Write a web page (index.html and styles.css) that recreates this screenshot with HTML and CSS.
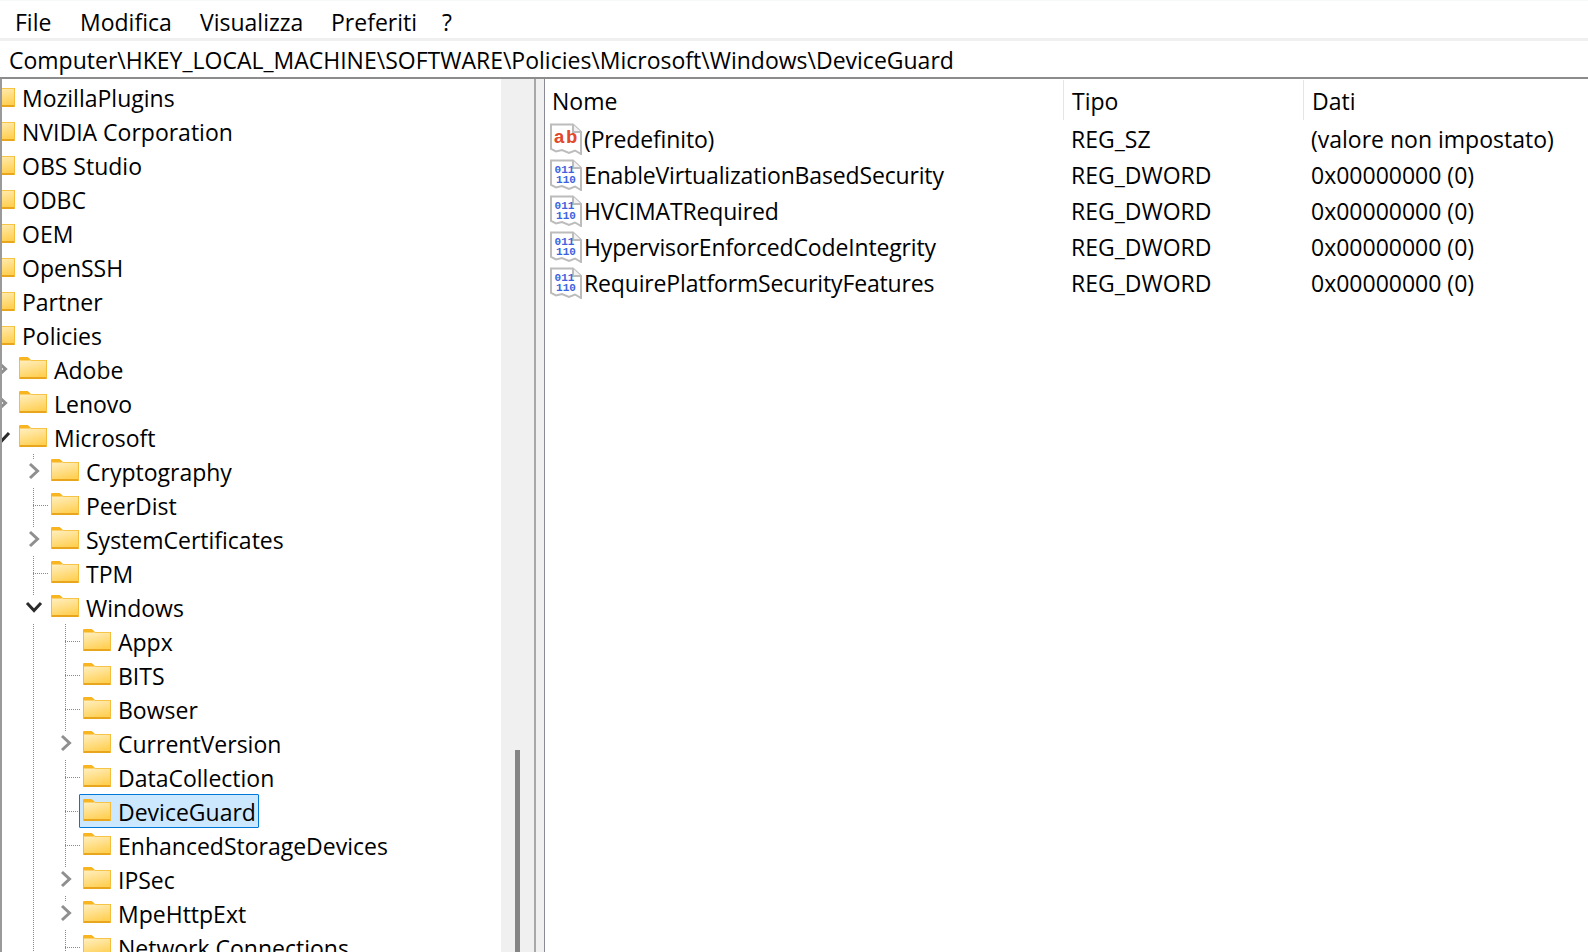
FILE: index.html
```html
<!DOCTYPE html>
<html lang="it">
<head>
<meta charset="utf-8">
<title>Editor del Registro di sistema</title>
<link rel="stylesheet" href="styles.css">
</head>
<body>
<svg class="defs" width="0" height="0" aria-hidden="true">
  <defs>
    <linearGradient id="fg" x1="0" y1="0" x2="0.35" y2="1">
      <stop offset="0" stop-color="#fff0c4"/>
      <stop offset="1" stop-color="#ffd054"/>
    </linearGradient>
    <symbol id="folder" viewBox="0 0 28 22">
      <path d="M0 1.5 Q0 0 1.5 0H8.5L12 3H28V5H0Z" fill="#f9b51f"/>
      <rect x="0" y="3" width="28" height="19" fill="url(#fg)"/>
      <path d="M0 1.5 Q0 0 1.5 0H8.5L12 3.5H0Z" fill="#f9b51f"/>
      <path d="M12 3.5H28" stroke="#f8c445" stroke-width="1"/>
      <path d="M0 21H28" stroke="#e9a51c" stroke-width="2"/>
      <path d="M27.5 3V22" stroke="#f4bd3c" stroke-width="1"/>
      <path d="M.5 3V22" stroke="#f4bd3c" stroke-width="1"/>
    </symbol>
    <symbol id="page" viewBox="0 0 32 32">
      <path d="M1 1.5H23L31 9V31L25 27.5L19 30L12 27L6 28.5L1 26Z" fill="#fff" stroke="#bcbcbc" stroke-width="2"/>
      <path d="M23 1.5V9H31" fill="#f2f2f2" stroke="#bcbcbc" stroke-width="2"/>
    </symbol>
    <symbol id="chev-right" viewBox="0 0 12 18">
      <path d="M2 2L9.5 9L2 16" fill="none" stroke="#8f8f8f" stroke-width="3"/>
    </symbol>
    <symbol id="chev-down" viewBox="0 0 18 12">
      <path d="M2 2L9 9.5L16 2" fill="none" stroke="#2b2b2b" stroke-width="3"/>
    </symbol>
  </defs>
</svg>

<nav class="menu">
  <span class="menu-item">File</span>
  <span class="menu-item">Modifica</span>
  <span class="menu-item">Visualizza</span>
  <span class="menu-item">Preferiti</span>
  <span class="menu-item">?</span>
</nav>
<div class="address">Computer\HKEY_LOCAL_MACHINE\SOFTWARE\Policies\Microsoft\Windows\DeviceGuard</div>

<main class="panes">
  <section class="tree-pane">
    <div class="tree">
      <div class="row"><span class="cell"></span><span class="node"><svg class="folder"><use href="#folder"/></svg><span class="label">MozillaPlugins</span></span></div>
      <div class="row"><span class="cell"></span><span class="node"><svg class="folder"><use href="#folder"/></svg><span class="label">NVIDIA Corporation</span></span></div>
      <div class="row"><span class="cell"></span><span class="node"><svg class="folder"><use href="#folder"/></svg><span class="label">OBS Studio</span></span></div>
      <div class="row"><span class="cell"></span><span class="node"><svg class="folder"><use href="#folder"/></svg><span class="label">ODBC</span></span></div>
      <div class="row"><span class="cell"></span><span class="node"><svg class="folder"><use href="#folder"/></svg><span class="label">OEM</span></span></div>
      <div class="row"><span class="cell"></span><span class="node"><svg class="folder"><use href="#folder"/></svg><span class="label">OpenSSH</span></span></div>
      <div class="row"><span class="cell"></span><span class="node"><svg class="folder"><use href="#folder"/></svg><span class="label">Partner</span></span></div>
      <div class="row"><span class="cell"></span><span class="node"><svg class="folder"><use href="#folder"/></svg><span class="label">Policies</span></span></div>

      <div class="row"><span class="cell"></span><span class="cell exp"><svg class="chev-r"><use href="#chev-right"/></svg></span><span class="node"><svg class="folder"><use href="#folder"/></svg><span class="label">Adobe</span></span></div>
      <div class="row"><span class="cell"></span><span class="cell exp"><svg class="chev-r"><use href="#chev-right"/></svg></span><span class="node"><svg class="folder"><use href="#folder"/></svg><span class="label">Lenovo</span></span></div>
      <div class="row"><span class="cell"></span><span class="cell exp"><svg class="chev-d"><use href="#chev-down"/></svg></span><span class="node"><svg class="folder"><use href="#folder"/></svg><span class="label">Microsoft</span></span></div>

      <div class="row"><span class="cell"></span><span class="cell"></span><span class="cell exp stub"><svg class="chev-r"><use href="#chev-right"/></svg></span><span class="node"><svg class="folder"><use href="#folder"/></svg><span class="label">Cryptography</span></span></div>
      <div class="row"><span class="cell"></span><span class="cell"></span><span class="cell branch"></span><span class="node"><svg class="folder"><use href="#folder"/></svg><span class="label">PeerDist</span></span></div>
      <div class="row"><span class="cell"></span><span class="cell"></span><span class="cell exp stub"><svg class="chev-r"><use href="#chev-right"/></svg></span><span class="node"><svg class="folder"><use href="#folder"/></svg><span class="label">SystemCertificates</span></span></div>
      <div class="row"><span class="cell"></span><span class="cell"></span><span class="cell branch"></span><span class="node"><svg class="folder"><use href="#folder"/></svg><span class="label">TPM</span></span></div>
      <div class="row"><span class="cell"></span><span class="cell"></span><span class="cell exp stub"><svg class="chev-d"><use href="#chev-down"/></svg></span><span class="node"><svg class="folder"><use href="#folder"/></svg><span class="label">Windows</span></span></div>

      <div class="row"><span class="cell"></span><span class="cell"></span><span class="cell guide"></span><span class="cell branch"></span><span class="node"><svg class="folder"><use href="#folder"/></svg><span class="label">Appx</span></span></div>
      <div class="row"><span class="cell"></span><span class="cell"></span><span class="cell guide"></span><span class="cell branch"></span><span class="node"><svg class="folder"><use href="#folder"/></svg><span class="label">BITS</span></span></div>
      <div class="row"><span class="cell"></span><span class="cell"></span><span class="cell guide"></span><span class="cell branch"></span><span class="node"><svg class="folder"><use href="#folder"/></svg><span class="label">Bowser</span></span></div>
      <div class="row"><span class="cell"></span><span class="cell"></span><span class="cell guide"></span><span class="cell exp stub"><svg class="chev-r"><use href="#chev-right"/></svg></span><span class="node"><svg class="folder"><use href="#folder"/></svg><span class="label">CurrentVersion</span></span></div>
      <div class="row"><span class="cell"></span><span class="cell"></span><span class="cell guide"></span><span class="cell branch"></span><span class="node"><svg class="folder"><use href="#folder"/></svg><span class="label">DataCollection</span></span></div>
      <div class="row"><span class="cell"></span><span class="cell"></span><span class="cell guide"></span><span class="cell branch"></span><span class="node selected"><svg class="folder"><use href="#folder"/></svg><span class="label">DeviceGuard</span></span></div>
      <div class="row"><span class="cell"></span><span class="cell"></span><span class="cell guide"></span><span class="cell branch"></span><span class="node"><svg class="folder"><use href="#folder"/></svg><span class="label">EnhancedStorageDevices</span></span></div>
      <div class="row"><span class="cell"></span><span class="cell"></span><span class="cell guide"></span><span class="cell exp stub"><svg class="chev-r"><use href="#chev-right"/></svg></span><span class="node"><svg class="folder"><use href="#folder"/></svg><span class="label">IPSec</span></span></div>
      <div class="row"><span class="cell"></span><span class="cell"></span><span class="cell guide"></span><span class="cell exp stub"><svg class="chev-r"><use href="#chev-right"/></svg></span><span class="node"><svg class="folder"><use href="#folder"/></svg><span class="label">MpeHttpExt</span></span></div>
      <div class="row"><span class="cell"></span><span class="cell"></span><span class="cell guide"></span><span class="cell branch"></span><span class="node"><svg class="folder"><use href="#folder"/></svg><span class="label">Network Connections</span></span></div>
    </div>
    <div class="scrollbar"><div class="thumb"></div></div>
  </section>
  <div class="splitter"></div>
  <section class="list">
    <div class="list-head">
      <div class="col-head col-name">Nome</div>
      <div class="col-head">Tipo</div>
      <div class="col-head">Dati</div>
    </div>
    <div class="list-row">
      <div class="name"><svg class="val-icon" viewBox="0 0 32 32"><use href="#page"/><text class="ab" x="16" y="20" text-anchor="middle">ab</text></svg><span>(Predefinito)</span></div>
      <div class="value">REG_SZ</div>
      <div class="value">(valore non impostato)</div>
    </div>
    <div class="list-row">
      <div class="name"><svg class="val-icon" viewBox="0 0 32 32"><use href="#page"/><text class="bin" x="14.5" y="13.5" text-anchor="middle">011</text><text class="bin" x="16" y="24" text-anchor="middle">110</text></svg><span>EnableVirtualizationBasedSecurity</span></div>
      <div class="value">REG_DWORD</div>
      <div class="value">0x00000000 (0)</div>
    </div>
    <div class="list-row">
      <div class="name"><svg class="val-icon" viewBox="0 0 32 32"><use href="#page"/><text class="bin" x="14.5" y="13.5" text-anchor="middle">011</text><text class="bin" x="16" y="24" text-anchor="middle">110</text></svg><span>HVCIMATRequired</span></div>
      <div class="value">REG_DWORD</div>
      <div class="value">0x00000000 (0)</div>
    </div>
    <div class="list-row">
      <div class="name"><svg class="val-icon" viewBox="0 0 32 32"><use href="#page"/><text class="bin" x="14.5" y="13.5" text-anchor="middle">011</text><text class="bin" x="16" y="24" text-anchor="middle">110</text></svg><span>HypervisorEnforcedCodeIntegrity</span></div>
      <div class="value">REG_DWORD</div>
      <div class="value">0x00000000 (0)</div>
    </div>
    <div class="list-row">
      <div class="name"><svg class="val-icon" viewBox="0 0 32 32"><use href="#page"/><text class="bin" x="14.5" y="13.5" text-anchor="middle">011</text><text class="bin" x="16" y="24" text-anchor="middle">110</text></svg><span>RequirePlatformSecurityFeatures</span></div>
      <div class="value">REG_DWORD</div>
      <div class="value">0x00000000 (0)</div>
    </div>
  </section>
</main>
</body>
</html>
```
FILE: styles.css
```css
* { box-sizing: border-box; }
html, body { margin: 0; height: 100%; }
body {
  width: 1588px;
  height: 952px;
  overflow: hidden;
  display: flex;
  flex-direction: column;
  background: #fff;
  color: #000;
  font-family: "Open Sans", "Noto Sans", sans-serif;
  font-size: 23px;
}
.defs { display: block; height: 0; }

.menu {
  height: 38px;
  flex: none;
  display: grid;
  grid-template-columns: 65px 120px 131px 111px auto;
  align-items: center;
  padding: 4px 0 0 15px;
  border-top: 1px solid #f6f9f9;
}
.address {
  flex: none;
  height: 41px;
  padding-left: 9px;
  border-top: 3px solid #f0f0f0;
  border-bottom: 2px solid #8c8c8c;
  line-height: 38px;
  white-space: nowrap;
}

.panes {
  flex: 1;
  min-height: 0;
  display: flex;
}
.tree-pane {
  width: 536px;
  flex: none;
  display: flex;
  border-left: 2px solid #9a9a9a;
  border-right: 2px solid #a8a8a8;
}
.tree {
  width: 499px;
  flex: none;
  overflow: hidden;
  padding-top: 1px;
}
.row {
  height: 34px;
  margin-left: -47px;
  display: flex;
  align-items: stretch;
  white-space: nowrap;
}
.cell {
  width: 32px;
  flex: none;
  display: flex;
  align-items: center;
}
.guide, .branch, .stub {
  background-image: repeating-linear-gradient(to bottom, #8a8a8a 0 1px, transparent 1px 2px);
  background-repeat: no-repeat;
  background-size: 1px 100%;
  background-position: 14px 0;
}
.branch {
  background-image:
    repeating-linear-gradient(to bottom, #8a8a8a 0 1px, transparent 1px 2px),
    repeating-linear-gradient(to right, #8a8a8a 0 1px, transparent 1px 2px);
  background-size: 1px 100%, 16px 1px;
  background-position: 14px 0, 14px 17px;
}
.stub {
  background-size: 1px 6px;
  background-position: 14px 0;
}
.exp svg { display: block; }
.chev-r { width: 12px; height: 18px; margin-left: 9px; }
.chev-d { width: 18px; height: 12px; margin-left: 6px; }
.node {
  display: flex;
  align-items: center;
  margin-left: -4px;
  padding: 0 2px 0 3px;
  border: 1px solid transparent;
}
.selected {
  background: #cce8ff;
  border-color: #0078d7;
  border-radius: 1px;
}
.folder {
  width: 28px;
  height: 22px;
  flex: none;
  margin: 0 7px 2px 0;
}
.label { display: block; padding-top: 2px; }

.scrollbar {
  flex: 1;
  display: flex;
  flex-direction: column;
  align-items: center;
  padding-top: 671px;
  background: #f0f0f0;
}
.thumb {
  flex: 1;
  width: 5px;
  background: #858585;
}
.splitter {
  width: 9px;
  flex: none;
  background: #f0f0f0;
  border-right: 1px solid #8a8a96;
}

.list {
  flex: 1;
  min-width: 0;
}
.list-head, .list-row {
  display: grid;
  grid-template-columns: 518px 240px 1fr;
  white-space: nowrap;
}
.list-head {
  height: 42px;
  padding-top: 1px;
}
.col-head {
  height: 40px;
  padding-left: 8px;
  border-left: 1px solid #e5e5e5;
  line-height: 42px;
}
.col-name {
  padding-left: 7px;
  border-left: 0;
}
.list-row {
  height: 36px;
  line-height: 37px;
}
.name {
  display: flex;
  align-items: center;
  padding-left: 5px;
  gap: 2px;
  letter-spacing: -0.15px;
}
.val-icon {
  width: 32px;
  height: 32px;
  flex: none;
  margin-bottom: 2px;
}
.value { padding-left: 8px; }
.ab {
  font: bold 19px "Liberation Mono", monospace;
  letter-spacing: 1px;
  fill: #e2492b;
}
.bin {
  font: bold 11px "Liberation Mono", monospace;
  letter-spacing: 0;
  fill: #3c63e0;
}
```
